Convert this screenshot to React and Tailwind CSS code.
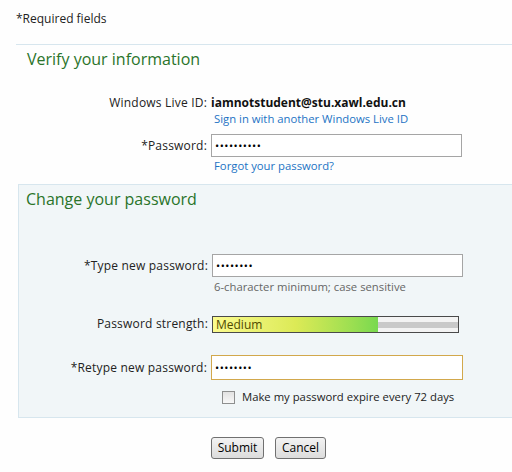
import React from "react";

const Dots = ({ n }) => (
  <span className="text-[11px] tracking-[0.5px] leading-none text-black">{"•".repeat(n)}</span>
);

export default function App() {
  return (
    <div className="w-[512px] h-[472px] bg-[#fefefe] font-['Open_Sans',sans-serif] text-[12px] text-[#222] overflow-hidden">
      <div className="pl-4 pt-[10px] h-[44px] leading-[18px]">*Required fields</div>
      <div className="ml-4 border-t border-[#d7e6ee]">
        <h2 className="pl-[11px] pt-[2px] text-[16px] leading-[24px] text-[#2a742a]">Verify your information</h2>
        <div className="mt-[24px] flex items-center leading-[16px]">
          <div className="w-[195px] text-right pr-[4px] tracking-[0.2px]">Windows Live ID:</div>
          <div className="font-bold text-[#111]">iamnotstudent@stu.xawl.edu.cn</div>
        </div>
        <div className="flex leading-[16px]">
          <div className="w-[198px]"></div>
          <a className="text-[#1c73c4] text-[11.3px]">Sign in with another Windows Live ID</a>
        </div>
        <div className="mt-[7px] flex items-center">
          <div className="w-[195px] text-right pr-[4px] tracking-[0.2px]">*Password:</div>
          <div className="w-[251px] h-[23px] border border-[#a5a5a5] bg-white flex items-center pl-[3px]">
            <Dots n={10} />
          </div>
        </div>
        <div className="flex leading-[16px] mt-[1px]">
          <div className="w-[198px]"></div>
          <a className="text-[#1c73c4] text-[11.3px]">Forgot your password?</a>
        </div>
        <div className="mt-[10px] ml-[2px] h-[234px] bg-[#f1f6f8] border-t border-l border-b border-[#d7e6ee]">
          <h2 className="pl-[7px] pt-[2px] text-[16px] leading-[24px] text-[#2a742a]">Change your password</h2>
          <div className="mt-[43px] flex items-center">
            <div className="w-[193px] text-right pr-[4px] tracking-[0.2px]">*Type new password:</div>
            <div className="w-[251px] h-[23px] border border-[#a5a5a5] bg-white flex items-center pl-[3px]">
              <Dots n={8} />
            </div>
          </div>
          <div className="flex leading-[16px] mt-[2px]">
            <div className="w-[195px]"></div>
            <span className="text-[#666] text-[11.3px]">6-character minimum; case sensitive</span>
          </div>
          <div className="mt-[20px] flex items-center">
            <div className="w-[193px] text-right pr-[4px] tracking-[0.2px]">Password strength:</div>
            <div className="w-[247px] h-[17px] border border-[#4a4a4a] bg-[#f3f3f3] relative flex items-center">
              <div className="absolute left-0 right-0 top-[5px] h-[6px] bg-[#c9c9c9]"></div>
              <div className="absolute left-0 top-0 bottom-0 w-[165px] bg-gradient-to-r from-[#fbfb8e] via-[#dcea56] to-[#78d94f]"></div>
              <span className="relative pl-[3px] text-[12px] leading-[15px] text-[#4f4a00]">Medium</span>
            </div>
          </div>
          <div className="mt-[22px] flex items-center">
            <div className="w-[192px] text-right pr-[4px] tracking-[0.2px]">*Retype new password:</div>
            <div className="w-[252px] h-[25px] border border-[#d2a84c] bg-white flex items-center pl-[3px]">
              <Dots n={8} />
            </div>
          </div>
          <div className="mt-[9px] flex items-center">
            <div className="w-[203px]"></div>
            <div className="w-[13px] h-[13px] border border-[#8e8f8f] bg-gradient-to-b from-[#e2e2e2] to-[#f8f8f8]"></div>
            <span className="ml-[7px] leading-[16px] text-[11.3px]">Make my password expire every 72 days</span>
          </div>
        </div>
        <div className="mt-[19px] flex items-center">
          <div className="w-[195px]"></div>
          <button className="w-[53px] h-[22px] border border-[#707070] rounded-[3px] bg-gradient-to-b from-[#f3f3f3] to-[#dcdcdc] text-[12px] text-black leading-none">Submit</button>
          <button className="ml-[11px] w-[51px] h-[22px] border border-[#707070] rounded-[3px] bg-gradient-to-b from-[#f3f3f3] to-[#dcdcdc] text-[12px] text-black leading-none">Cancel</button>
        </div>
      </div>
    </div>
  );
}
